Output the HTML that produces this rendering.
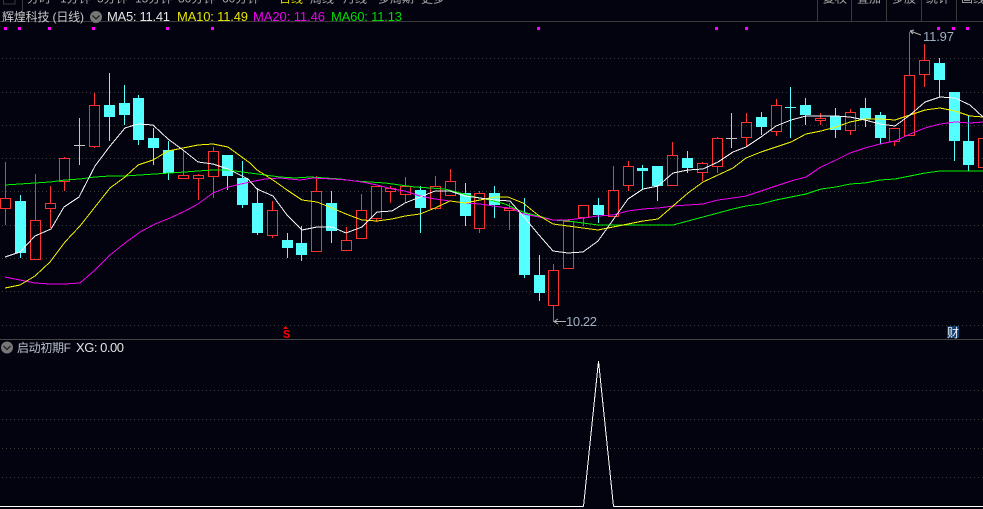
<!DOCTYPE html>
<html><head><meta charset="utf-8"><style>
html,body{margin:0;padding:0;background:#03030f;width:983px;height:509px;overflow:hidden}
svg{display:block;position:absolute;left:0;top:0}
text{font-family:"Liberation Sans","Noto Sans CJK SC",sans-serif}
</style></head><body>
<svg width="983" height="509" viewBox="0 0 983 509" xmlns="http://www.w3.org/2000/svg">
<rect width="983" height="509" fill="#03030f"/>
<g font-size="12" fill="#a8a8a8">
<text x="27" y="2.5">分时</text><text x="60" y="2.5">1分钟</text><text x="97" y="2.5">5分钟</text><text x="135" y="2.5">15分钟</text><text x="178" y="2.5">30分钟</text><text x="222" y="2.5">60分钟</text>
<text x="279" y="2.5" fill="#d8d800">日线</text><text x="310" y="2.5">周线</text><text x="343" y="2.5">月线</text><text x="378" y="2.5">多周期</text><text x="421" y="2.5">更多</text>
<text x="823" y="2.5">复权</text><text x="857" y="2.5">叠加</text><text x="892" y="2.5">多股</text><text x="926" y="2.5">统计</text><text x="961" y="2.5">画线</text>
</g>
<g shape-rendering="crispEdges" stroke="#3a3a3a" fill="none">
<path d="M0 21.5H983M22.5 0V21M817.5 0V21M851.5 0V21M886.5 0V21M921.5 0V21M956.5 0V21M3.5 0V4H15V0"/>
<path d="M0 339.5H983" stroke="#444"/>
</g>
<g stroke="#3b3f3b" stroke-dasharray="1 3" shape-rendering="crispEdges" fill="none">
<path d="M2 58.5H983M2 92.5H983M2 125.5H983M2 158.5H983M2 191.5H983M2 225.5H983M2 258.5H983M2 291.5H983M2 325.5H983M2 390.5H983M2 419.5H983M2 448.5H983M2 477.5H983"/>
</g>
<path fill="#f0f" shape-rendering="crispEdges" d="M4 27h3v3h-3zM18 27h3v3h-3zM48 27h3v3h-3zM92 27h3v3h-3zM166 27h3v3h-3zM211 27h3v3h-3zM537 27h3v3h-3zM715 27h3v3h-3zM745 27h3v3h-3zM937 27h3v3h-3zM952 27h3v3h-3zM966 27h3v3h-3z"/>
<text x="2" y="21" font-size="12" fill="#c8c8c8" textLength="82">辉煌科技 (日线)</text>
<circle cx="96" cy="17" r="6" fill="#777"/><path d="M92.5 15.5L96 19L99.5 15.5" fill="none" stroke="#222" stroke-width="1.3"/>
<text x="107" y="21" font-size="13" fill="#e4e4e4" textLength="63">MA5: 11.41</text>
<text x="177" y="21" font-size="13" fill="#e6e600" textLength="71">MA10: 11.49</text>
<text x="253" y="21" font-size="13" fill="#f000f0" textLength="72">MA20: 11.46</text>
<text x="331" y="21" font-size="13" fill="#00dc00" textLength="71">MA60: 11.13</text>

<path shape-rendering="crispEdges" fill="none" stroke="#ff3232" d="M5.5 162V198M.5 198.5h10V208.5h-10zM5.5 208V225M35.5 174V220M30.5 220.5h10V259.5h-10zM50.5 186V203M45.5 203.5h10V208.5h-10zM50.5 208V228M64.5 157V158M59.5 158.5h10V181.5h-10zM64.5 181V191M94.5 93V105M89.5 105.5h10V146.5h-10zM94.5 146V148M183.5 150V175M178.5 175.5h10V178.5h-10zM198.5 174V175M193.5 175.5h10V178.5h-10zM198.5 178V200M213.5 147V151M208.5 151.5h10V176.5h-10zM213.5 176V198M272.5 201V210M267.5 210.5h10V235.5h-10zM272.5 235V238M316.5 176V191M311.5 191.5h10V251.5h-10zM346.5 227V240M341.5 240.5h10V250.5h-10zM361.5 194V210M356.5 210.5h10V238.5h-10zM371.5 186.5h10V218.5h-10zM376.5 218V222M390.5 186V188M385.5 188.5h10V191.5h-10zM390.5 191V203M405.5 177V186M400.5 186.5h10V194.5h-10zM405.5 194V203M435.5 176V186M430.5 186.5h10V208.5h-10zM435.5 208V210M450.5 169V181M445.5 181.5h10V195.5h-10zM479.5 191V193M474.5 193.5h10V228.5h-10zM479.5 228V233M509.5 203V208M504.5 208.5h10V210.5h-10zM509.5 210V230M553.5 264V270M548.5 270.5h10V305.5h-10zM553.5 305V322M568.5 219V221M563.5 221.5h10V268.5h-10zM578.5 205.5h10V217.5h-10zM583.5 217V226M613.5 166V190M608.5 190.5h10V216.5h-10zM628.5 161V166M623.5 166.5h10V185.5h-10zM628.5 185V191M672.5 142V155M667.5 155.5h10V185.5h-10zM702.5 162V163M697.5 163.5h10V172.5h-10zM702.5 172V181M717.5 137V138M712.5 138.5h10V166.5h-10zM717.5 166V173M746.5 113V122M741.5 122.5h10V137.5h-10zM746.5 137V146M776.5 99V105M771.5 105.5h10V131.5h-10zM776.5 131V136M820.5 113V118M815.5 118.5h10V120.5h-10zM820.5 120V125M850.5 109V112M845.5 112.5h10V130.5h-10zM850.5 130V135M889.5 128.5h10V141.5h-10zM894.5 141V146M909.5 32V75M904.5 75.5h10V135.5h-10zM924.5 44V60M919.5 60.5h10V74.5h-10zM924.5 74V87M978.5 138.5h10V167.5h-10z"/>
<path shape-rendering="crispEdges" fill="none" stroke="#54ffff" d="M20.5 195V258M109.5 73V141M124.5 85V125M138.5 95V145M153.5 128V165M168.5 141V180M227.5 155V190M242.5 161V208M257.5 188V235M287.5 233V258M301.5 226V261M331.5 191V243M420.5 186V233M465.5 183V226M494.5 186V218M524.5 198V278M539.5 255V301M598.5 198V223M642.5 165V190M657.5 166V201M687.5 151V173M761.5 112V135M790.5 87V138M805.5 98V125M835.5 108V138M865.5 98V127M880.5 112V144M939.5 58V97M954.5 92V161M968.5 116V171M785 107.5h11"/>
<path shape-rendering="crispEdges" fill="#54ffff" d="M15 201h11V253h-11zM104 105h11V117h-11zM119 103h11V115h-11zM133 98h11V140h-11zM148 138h11V148h-11zM163 150h11V173h-11zM222 155h11V176h-11zM237 178h11V205h-11zM252 203h11V233h-11zM282 240h11V248h-11zM296 243h11V255h-11zM326 203h11V231h-11zM415 190h11V208h-11zM460 193h11V216h-11zM489 193h11V205h-11zM519 213h11V275h-11zM534 275h11V293h-11zM593 205h11V215h-11zM637 168h11V171h-11zM652 166h11V186h-11zM682 158h11V168h-11zM756 117h11V127h-11zM800 105h11V115h-11zM830 116h11V130h-11zM860 108h11V119h-11zM875 115h11V138h-11zM934 63h11V80h-11zM949 92h11V141h-11zM963 141h11V165h-11z"/>
<path shape-rendering="crispEdges" fill="none" stroke="#c4c4c4" d="M79.5 118V165M74 145.5h11M731.5 113V148M726 138.5h11"/>

<g fill="none" stroke-width="1" shape-rendering="crispEdges">
<polyline stroke="#00f000" points="5,185 20,184 35,183 50,182 65,180 80,179 95,177 110,176 125,176 140,175 155,174 170,173 185,172 198,171 213,170 228,170 250,173 265,175 280,177 295,178 310,177 325,178 340,179 355,181 370,182 385,183 400,185 415,187 430,188 445,189 460,193 475,197 490,200 505,204 523,212 538,216 553,220 568,221 583,223 598,225 673,225 688,221 703,217 718,213 733,209 746,206 761,204 776,200 791,197 806,194 821,189 836,187 850,184 865,183 880,180 895,179 910,176 925,173 940,171 983,171"/>
<polyline stroke="#f000f0" points="5,277 20,280 35,283 50,284 65,284 80,283 95,270 110,255 125,243 140,232 155,224 170,218 185,211 198,204 213,193 228,187 250,182 265,179 280,178 300,180 313,178 332,179 347,180 362,182 377,185 392,189 405,191 420,196 435,199 450,201 465,203 480,204 500,207 510,208 524,214 539,217 553,220 568,220 583,218 598,216 613,215 628,211 643,209 658,208 673,206 688,205 703,204 718,200 733,198 746,196 761,191 776,186 791,181 806,177 821,167 836,160 850,153 865,148 880,144 895,141 910,134 925,128 940,124 955,122 970,123 983,122"/>
<polyline stroke="#f0f000" points="5,288 20,285 35,276 50,262 65,242 80,226 95,207 110,188 125,177 138,165 153,160 168,151 183,148 198,145 213,144 228,147 250,163 257,170 273,180 287,190 302,200 317,202 332,208 346,214 362,220 377,221 392,219 405,216 420,214 435,208 450,201 465,203 480,200 495,197 508,197 523,203 538,215 553,224 568,226 583,228 598,230 613,227 628,224 643,221 658,219 673,206 688,193 703,182 718,175 733,168 746,158 761,152 776,147 791,142 806,134 821,131 836,127 850,122 865,119 880,119 895,120 910,115 925,110 940,108 955,111 970,116 983,117"/>
<polyline stroke="#f4f4f4" points="5,257 20,252 35,236 51,229 64,207 79,197 95,166 110,146 125,128 138,124 153,125 168,139 183,150 198,162 213,164 228,169 248,179 257,189 273,196 287,215 302,230 317,227 332,227 346,233 362,227 377,212 392,211 405,203 420,197 435,191 450,191 465,196 480,198 495,200 510,201 524,217 539,235 553,251 568,253 583,252 598,241 613,220 628,199 643,189 658,186 673,173 688,170 703,169 718,162 733,152 746,147 761,137 776,126 791,120 806,116 821,116 836,116 850,117 865,120 880,124 895,126 910,115 925,102 940,97 955,98 970,105 983,117"/>
</g>

<g fill="none" stroke="#b4b4b4" stroke-width="1">
<path d="M554 321.5H566M554 321.5L558 319M554 321.5L558 324"/>
<path d="M910 31L921 35M910 31L914 30M910 31L913 34"/>
</g>
<text x="566" y="326" font-size="13" fill="#9fb0c0" textLength="31">10.22</text>
<text x="923" y="41" font-size="13" fill="#9fb0c0" textLength="31">11.97</text>

<path d="M285.5 326L288 329H283z" fill="#f00"/>
<text x="283" y="338" font-size="12" font-weight="bold" fill="#f00" style="font-family:'Liberation Mono',monospace">S</text>
<rect x="947" y="326" width="12" height="12" fill="#0b3b70"/>
<text x="947" y="337" font-size="12" fill="#eee">财</text>

<circle cx="7" cy="347.5" r="6" fill="#777"/><path d="M3.5 346L7 349.5L10.5 346" fill="none" stroke="#222" stroke-width="1.3"/>
<text x="17" y="352" font-size="12" fill="#b8c0c8" textLength="54">启动初期F</text>
<text x="76" y="352" font-size="13" fill="#e4e4e4" textLength="48">XG: 0.00</text>

<path fill="none" stroke="#fff" shape-rendering="crispEdges" d="M0 506.5H583.5M613.5 506.5H983"/>
<polyline fill="none" stroke="#fff" stroke-width="1" shape-rendering="crispEdges" points="583.5,506.5 598.5,361 613.5,506.5"/>
</svg>
</body></html>
